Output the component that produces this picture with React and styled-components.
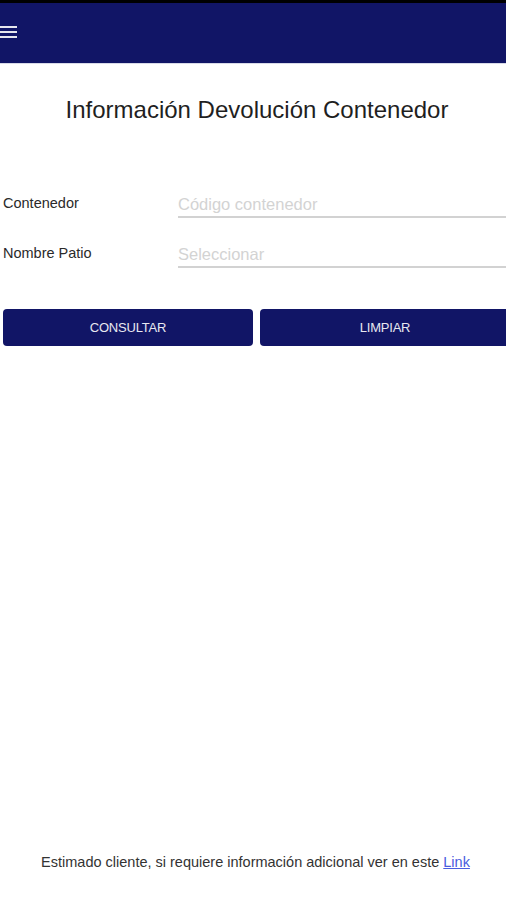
import React from "react";
import styled, { createGlobalStyle } from "styled-components";

const GlobalStyle = createGlobalStyle`
  html, body {
    margin: 0;
    padding: 0;
    background: #ffffff;
    overflow: hidden;
    font-family: "Liberation Sans", Arial, sans-serif;
  }
`;

const Page = styled.div`
  width: 506px;
  height: 900px;
  display: flex;
  flex-direction: column;
  overflow: hidden;
  border-top: 3px solid #000;
  box-sizing: border-box;
`;

const Header = styled.header`
  height: 60px;
  background: #111566;
  display: flex;
  align-items: center;
  flex-shrink: 0;
  border-bottom: 1px solid #d8dae8;
`;

const MenuButton = styled.div`
  width: 17px;
  display: flex;
  flex-direction: column;
  gap: 3px;
  margin-top: -2px;

  span {
    height: 2px;
    background: #e6e6ee;
  }
`;

const Title = styled.h1`
  margin: 32px 0 0;
  text-align: center;
  font-weight: 400;
  font-size: 24px;
  color: #1f1f1f;
  padding-left: 8px;
`;

const Form = styled.div`
  width: 507px;
  margin: 62px 0 0 3px;
  display: flex;
  flex-direction: column;
  gap: 18px;
`;

const Row = styled.div`
  display: grid;
  grid-template-columns: 175px 1fr;
  align-items: end;
`;

const Label = styled.label`
  font-size: 14.5px;
  color: #2a2a2a;
  padding-bottom: 7px;
`;

const Input = styled.div`
  height: 32px;
  border-bottom: 2px solid #d2d2d2;
  display: flex;
  align-items: flex-end;
  padding-bottom: 2px;
  font-size: 16.5px;
  color: #d3d3d3;
  box-sizing: border-box;
`;

const Buttons = styled.div`
  width: 510px;
  margin: 41px 0 0 3px;
  display: grid;
  grid-template-columns: 250px 250px;
  gap: 7px;
`;

const Button = styled.button`
  height: 37px;
  background: #111566;
  color: #e8e8f0;
  border: none;
  border-radius: 4px;
  font-family: "Liberation Sans", Arial, sans-serif;
  font-size: 13px;
  letter-spacing: -0.2px;
`;

const Spacer = styled.div`
  flex: 1;
`;

const Footer = styled.p`
  margin: 0 0 30px;
  text-align: center;
  font-size: 14.5px;
  color: #333;
  padding-left: 5px;

  a {
    color: #4a5de0;
    text-decoration: underline;
  }
`;

export default function App() {
  return (
    <>
      <GlobalStyle />
      <Page>
        <Header>
          <MenuButton>
            <span />
            <span />
            <span />
          </MenuButton>
        </Header>

        <Title>Información Devolución Contenedor</Title>

        <Form>
          <Row>
            <Label>Contenedor</Label>
            <Input>Código contenedor</Input>
          </Row>
          <Row>
            <Label>Nombre Patio</Label>
            <Input>Seleccionar</Input>
          </Row>
        </Form>

        <Buttons>
          <Button>CONSULTAR</Button>
          <Button>LIMPIAR</Button>
        </Buttons>

        <Spacer />

        <Footer>
          Estimado cliente, si requiere información adicional ver en este{" "}
          <a href="#">Link</a>
        </Footer>
      </Page>
    </>
  );
}
